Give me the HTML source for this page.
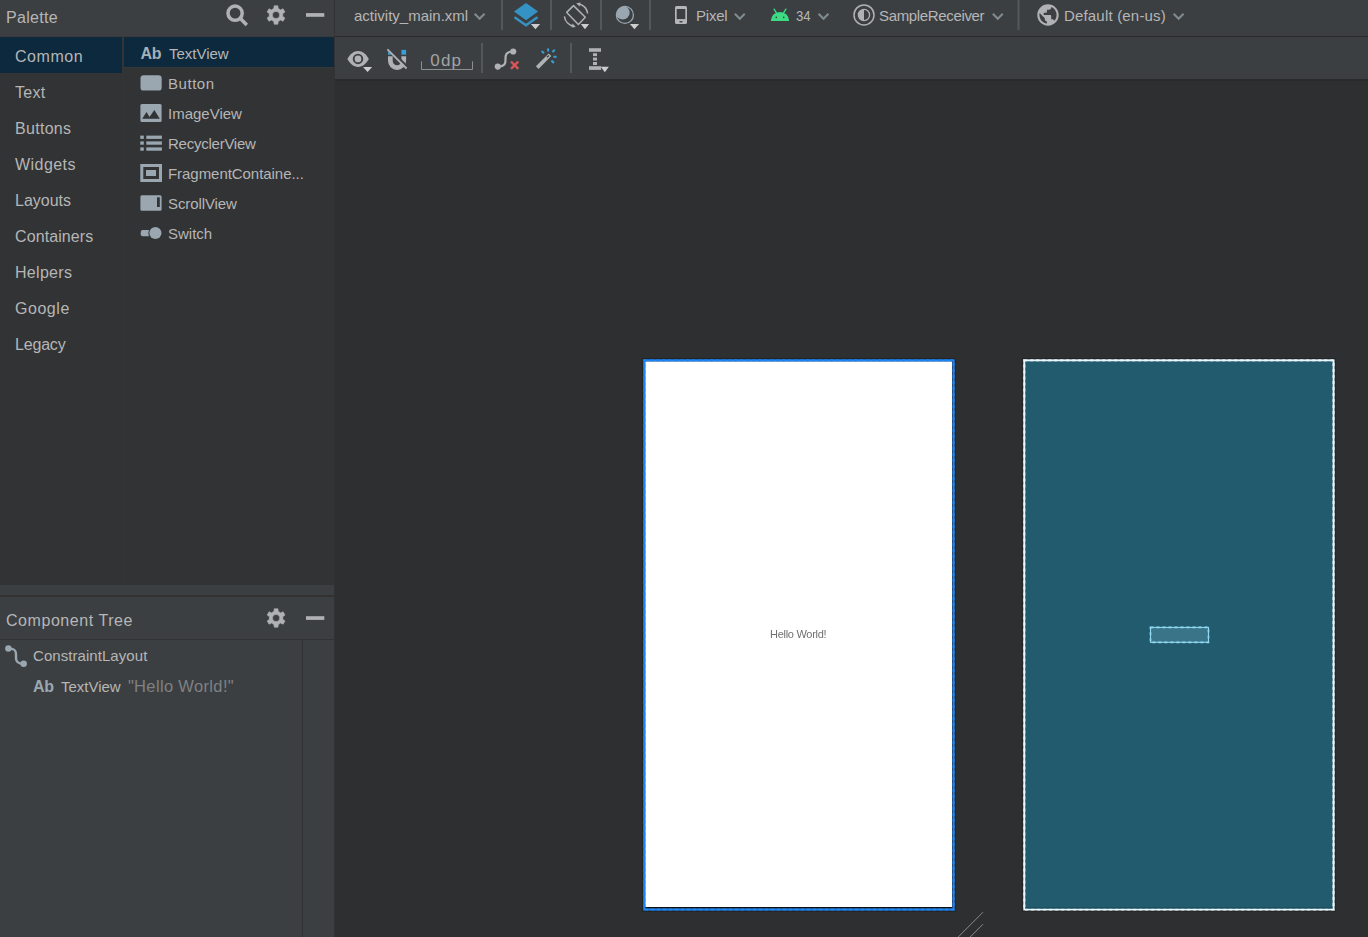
<!DOCTYPE html>
<html lang="en">
<head>
<meta charset="utf-8">
<title>activity_main.xml - Layout Editor</title>
<style>
*{box-sizing:border-box;margin:0;padding:0}
html,body{width:1368px;height:937px;overflow:hidden;background:#2d2f31}
body{position:relative;font-family:"Liberation Sans",sans-serif;color:#b6b6b6;font-size:16px}
.abs{position:absolute}
.t{position:absolute;white-space:nowrap;line-height:20px;height:20px}
svg{position:absolute;overflow:visible}
/* left panel */
#phead{left:0;top:0;width:334px;height:36px;background:#3c3f41}
#pline{left:0;top:36px;width:334px;height:1px;background:#393939}
#cats{left:0;top:37px;width:122px;height:548px;background:#313335}
#catdiv{left:122px;top:37px;width:2px;height:548px;background:#323435}
#items{left:124px;top:37px;width:210px;height:548px;background:#313335}
#catsel{left:0;top:37px;width:122px;height:36px;background:#0d293e}
#itemsel{left:124px;top:37px;width:210px;height:30px;background:#0d293e}
#split{left:0;top:585px;width:334px;height:10px;background:#3c3f41}
#splitline{left:0;top:595px;width:334px;height:2px;background:#323232}
#thead{left:0;top:597px;width:334px;height:42px;background:#3c3f41}
#tline{left:0;top:639px;width:334px;height:1px;background:#323232}
#tree{left:0;top:640px;width:334px;height:297px;background:#3c3f41}
#treecol{left:302px;top:640px;width:1px;height:297px;background:#323232}
#vdiv{left:334px;top:0;width:1px;height:937px;background:#323232}
/* toolbars */
#tb1{left:335px;top:0;width:1033px;height:36px;background:#3c3f41}
#tb1line{left:335px;top:36px;width:1033px;height:1px;background:#2a2a2a}
#tb2{left:335px;top:37px;width:1033px;height:42px;background:#3c3f41}
#tb2line{left:335px;top:79px;width:1033px;height:2px;background:#2a2a2b}
.sep{position:absolute;width:1px;background:#555555}
.cat{left:15px;font-size:16px}
.item{left:168px;font-size:15px}
</style>
</head>
<body>
<!-- PALETTE PANEL -->
<div class="abs" id="phead"></div>
<div class="abs" id="pline"></div>
<div class="abs" id="cats"></div>
<div class="abs" id="catdiv"></div>
<div class="abs" id="items"></div>
<div class="abs" id="catsel"></div>
<div class="abs" id="itemsel"></div>
<div class="abs" style="left:124px;top:67px;width:210px;height:1px;background:#363738"></div>
<div class="abs" id="split"></div>
<div class="abs" id="splitline"></div>
<div class="abs" id="thead"></div>
<div class="abs" id="tline"></div>
<div class="abs" id="tree"></div>
<div class="abs" id="treecol"></div>
<div class="abs" id="vdiv"></div>
<div class="abs" id="tb1"></div>
<div class="abs" id="tb1line"></div>
<div class="abs" id="tb2"></div>
<div class="abs" id="tb2line"></div>

<span class="t" id="tPalette" style="left:6.00px;top:8px;letter-spacing:0.300px">Palette</span>
<span class="t cat" id="c0" style="top:47px;left:15.00px;letter-spacing:0.540px">Common</span>
<span class="t cat" id="c1" style="top:83px;left:15.00px;letter-spacing:0.300px">Text</span>
<span class="t cat" id="c2" style="top:119px;left:15.00px;letter-spacing:0.300px">Buttons</span>
<span class="t cat" id="c3" style="top:155px;left:15.00px;letter-spacing:0.450px">Widgets</span>
<span class="t cat" id="c4" style="top:191px;left:15.00px">Layouts</span>
<span class="t cat" id="c5" style="top:227px;left:15.00px;letter-spacing:0.100px">Containers</span>
<span class="t cat" id="c6" style="top:263px;left:15.00px;letter-spacing:0.300px">Helpers</span>
<span class="t cat" id="c7" style="top:299px;left:15.00px;letter-spacing:0.540px">Google</span>
<span class="t cat" id="c8" style="top:335px;left:15.00px;letter-spacing:-0.180px">Legacy</span>

<span class="t item" id="i0" style="top:44px;left:168.90px">TextView</span>
<span class="t item" id="i1" style="top:74px;left:168.00px;letter-spacing:0.540px">Button</span>
<span class="t item" id="i2" style="top:104px;left:168.00px">ImageView</span>
<span class="t item" id="i3" style="top:134px;left:168.00px;letter-spacing:-0.246px">RecyclerView</span>
<span class="t item" id="i4" style="top:164px;left:168.00px;letter-spacing:-0.050px">FragmentContaine...</span>
<span class="t item" id="i5" style="top:194px;left:168.00px;letter-spacing:-0.100px">ScrollView</span>
<span class="t item" id="i6" style="top:224px;left:168.00px">Switch</span>

<span class="t" id="tCT" style="left:6.00px;top:611px;letter-spacing:0.554px">Component Tree</span>
<span class="t" id="tCL" style="left:33.00px;top:646px;font-size:15px;letter-spacing:0.060px">ConstraintLayout</span>
<span class="t" id="tTV" style="left:60.90px;top:677px;font-size:15px">TextView</span>
<span class="t" id="tHW" style="left:127.90px;top:676px;font-size:16.5px;color:#7f8183;letter-spacing:0.347px">"Hello World!"</span>

<!-- TOOLBAR 1 TEXT -->
<span class="t" id="tFile" style="left:354.00px;top:6px;font-size:15px">activity_main.xml</span>
<span class="t" id="tPixel" style="left:696.00px;top:6px;font-size:15px;letter-spacing:-0.225px">Pixel</span>
<span class="t" id="t34" style="left:795.6px;top:6px;font-size:15px;transform:scaleX(0.88);transform-origin:0 0">34</span>
<span class="t" id="tSR" style="left:879.00px;top:6px;font-size:15px;letter-spacing:-0.346px">SampleReceiver</span>
<span class="t" id="tDef" style="left:1063.90px;top:6px;font-size:15px;letter-spacing:0.193px">Default (en-us)</span>
<span class="t" id="t0dp" style="color:#a2a4a6;left:430.18px;top:51px;font-size:17px;letter-spacing:1.260px">0dp</span>

<!-- ICONS TOP -->
<svg id="icons" width="1368" height="937" viewBox="0 0 1368 937" style="left:0;top:0">
<g fill="#afb1b3">
<circle cx="235.1" cy="13.15" r="7.1" fill="none" stroke="#afb1b3" stroke-width="3.5"/>
<line x1="240.4" y1="18.4" x2="246.800" y2="24.900" stroke="#afb1b3" stroke-width="3.600"/>
<path fill-rule="evenodd" stroke="#afb1b3" stroke-width="0.6" stroke-linejoin="round" d="M273.80 8.57 L274.13 5.79 L277.87 5.79 L278.20 8.57 A6.80 6.80 0 0 1 280.47 9.88 L283.04 8.78 L284.91 12.01 L282.67 13.69 A6.80 6.80 0 0 1 282.67 16.31 L284.91 17.99 L283.04 21.22 L280.47 20.12 A6.80 6.80 0 0 1 278.20 21.43 L277.87 24.21 L274.13 24.21 L273.80 21.43 A6.80 6.80 0 0 1 271.53 20.12 L268.96 21.22 L267.09 17.99 L269.33 16.31 A6.80 6.80 0 0 1 269.33 13.69 L267.09 12.01 L268.96 8.78 L271.53 9.88 A6.80 6.80 0 0 1 273.80 8.57 Z M272.40 15.00 a3.60 3.60 0 1 0 7.20 0 a3.60 3.60 0 1 0 -7.20 0 Z"/>
<rect x="306" y="13.100" width="18.300" height="3.700"/>
<path fill-rule="evenodd" stroke="#afb1b3" stroke-width="0.6" stroke-linejoin="round" d="M273.90 611.57 L274.23 608.79 L277.97 608.79 L278.30 611.57 A6.80 6.80 0 0 1 280.57 612.88 L283.14 611.78 L285.01 615.01 L282.77 616.69 A6.80 6.80 0 0 1 282.77 619.31 L285.01 620.99 L283.14 624.22 L280.57 623.12 A6.80 6.80 0 0 1 278.30 624.43 L277.97 627.21 L274.23 627.21 L273.90 624.43 A6.80 6.80 0 0 1 271.63 623.12 L269.06 624.22 L267.19 620.99 L269.43 619.31 A6.80 6.80 0 0 1 269.43 616.69 L267.19 615.01 L269.06 611.78 L271.63 612.88 A6.80 6.80 0 0 1 273.90 611.57 Z M272.50 618.00 a3.60 3.60 0 1 0 7.20 0 a3.60 3.60 0 1 0 -7.20 0 Z"/>
<rect x="306" y="616.200" width="18.300" height="3.700"/>
</g>
<rect x="501" y="0" width="2" height="30" fill="#555759"/>
<rect x="550" y="0" width="2" height="30" fill="#555759"/>
<rect x="600" y="0" width="2" height="30" fill="#555759"/>
<rect x="649" y="0" width="2" height="30" fill="#555759"/>
<rect x="1017.5" y="0" width="2" height="30" fill="#555759"/>
<rect x="481" y="43" width="2" height="30" fill="#555759"/>
<rect x="570" y="43" width="2" height="30" fill="#555759"/>
<polyline points="474.65,13.85 479.60,18.8 484.55,13.85" fill="none" stroke="#7f8b91" stroke-width="2.1" stroke-linecap="butt" stroke-linejoin="miter"/>
<polyline points="734.85,13.85 739.80,18.8 744.75,13.85" fill="none" stroke="#7f8b91" stroke-width="2.1" stroke-linecap="butt" stroke-linejoin="miter"/>
<polyline points="818.55,13.85 823.50,18.8 828.45,13.85" fill="none" stroke="#7f8b91" stroke-width="2.1" stroke-linecap="butt" stroke-linejoin="miter"/>
<polyline points="992.85,13.85 997.80,18.8 1002.75,13.85" fill="none" stroke="#7f8b91" stroke-width="2.1" stroke-linecap="butt" stroke-linejoin="miter"/>
<polyline points="1173.65,13.85 1178.60,18.8 1183.55,13.85" fill="none" stroke="#7f8b91" stroke-width="2.1" stroke-linecap="butt" stroke-linejoin="miter"/>
<polygon points="526,2.9 538.1,11.5 526,20.2 514,11.5" fill="#3592c4"/>
<polyline points="515.3,17.7 526,25.2 536.7,17.7" fill="none" stroke="#3592c4" stroke-width="2.5" stroke-linecap="round"/>
<polygon points="530.9,24.0 540.1,24.0 535.5,29.2" fill="#cdcdcd"/>
<g fill="none" stroke="#afb1b3" stroke-width="1.5">
<polygon points="573.500,5.600 585.300,17.200 578.400,24.400 566.700,12.400" stroke-linejoin="round"/>
<path d="M578.5 3.9 A11.6 11.6 0 0 1 587.7 13.5"/>
<path d="M564.4 16.3 A11.6 11.6 0 0 0 573.6 26.2"/>
</g>
<polygon points="576.2,3.2 580.6,2.6 579.6,6.6" fill="#afb1b3"/>
<polygon points="575.8,26.9 571.6,27.4 572.6,23.6" fill="#afb1b3"/>
<polygon points="580.8,24.0 589.1,24.0 585.0,29.2" fill="#cdcdcd"/>
<clipPath id="ncl"><circle cx="624.9" cy="14.9" r="8.6"/></clipPath>
<circle cx="622.7" cy="12.6" r="7" fill="#9aa7b0" clip-path="url(#ncl)"/>
<circle cx="624.9" cy="14.9" r="8.5" fill="none" stroke="#9aa7b0" stroke-width="1.3"/>
<polygon points="629.9,24.0 639.1,24.0 634.5,29.2" fill="#cdcdcd"/>
<rect x="675" y="5.9" width="12" height="18.2" rx="1.6" fill="#b4b6b8"/>
<rect x="676.7" y="9" width="8.6" height="10.1" fill="#3c3f41"/>
<ellipse cx="681" cy="21.7" rx="1.8" ry="0.7" fill="#3c3f41"/>
<path d="M770.8 21.1 A9.2 9.2 0 0 1 789.2 21.1 Z" fill="#3ddc84"/>
<path d="M776.6 13.2 L774.1 9.1 M783.4 13.2 L785.9 9.1" stroke="#3ddc84" stroke-width="1.3" stroke-linecap="round"/>
<circle cx="776.3" cy="17.3" r="0.85" fill="#3c3f41"/><circle cx="783.7" cy="17.3" r="0.85" fill="#3c3f41"/>
<circle cx="864" cy="14.95" r="10" fill="none" stroke="#afb1b3" stroke-width="1.5"/>
<circle cx="864" cy="15" r="5.6" fill="none" stroke="#afb1b3" stroke-width="1.3"/>
<path d="M864 9.4 A5.6 5.6 0 0 0 864 20.6 Z" fill="#afb1b3"/>
<path transform="translate(1035.16 2.16) scale(1.07)" fill="#afb1b3" d="M12 2C6.48 2 2 6.48 2 12s4.48 10 10 10 10-4.48 10-10S17.52 2 12 2zm-1 17.93c-3.95-.49-7-3.85-7-7.93 0-.62.08-1.21.21-1.79L9 15v1c0 1.1.9 2 2 2v1.930zm6.9-2.54c-.26-.81-1-1.39-1.9-1.39h-1v-3c0-.55-.45-1-1-1H8v-2h2c.55 0 1-.45 1-1V7h2c1.1 0 2-.9 2-2v-.41c2.93 1.190 5 4.060 5 7.410 0 2.080-.8 3.970-2.100 5.390z"/>
<path d="M347.400 59 C350 54.200 353.600 51 358.100 51 C362.600 51 366.200 54.200 368.800 59 C366.200 63.800 362.600 66.900 358.100 66.900 C353.600 66.900 350 63.800 347.400 59 Z" fill="#afb1b3"/>
<circle cx="358" cy="58.900" r="4.300" fill="none" stroke="#3c3f41" stroke-width="1.900"/>
<polygon points="363.0,67.0 372.1,67.0 367.6,72.1" fill="#cdcdcd"/>
<path d="M388 56.200 L388 60.850 A9.050 9.050 0 0 0 406.100 60.850 L406.100 56.200 L401.400 56.200 L401.400 60.850 A4.350 4.350 0 0 1 392.700 60.850 L392.700 56.200 Z" fill="#afb1b3"/>
<polygon points="388,51.300 388,54.700 391.600,54.700" fill="#389fd6"/><rect x="401.4" y="49.9" width="4.7" height="4.8" fill="#389fd6"/>
<line x1="388.700" y1="48" x2="407.900" y2="67.200" stroke="#3c3f41" stroke-width="2"/>
<line x1="387.400" y1="49.300" x2="406.600" y2="68.500" stroke="#afb1b3" stroke-width="1.8"/>
<path d="M421.500 61.300 V69.500 H472.500 V61.300" fill="none" stroke="#8c8e90" stroke-width="1"/>
<circle cx="513.2" cy="51.5" r="3.1" fill="#afb1b3"/><circle cx="497.8" cy="66.6" r="3.1" fill="#afb1b3"/>
<path d="M497.800 66.600 C506 66.600 505.500 62 505.500 59 C505.500 55.500 505.500 51.500 513.200 51.500" fill="none" stroke="#afb1b3" stroke-width="2.2"/>
<path d="M511 61.500 L518.300 68.900 M518.300 61.500 L511 68.900" stroke="#d95558" stroke-width="2.400"/>
<line x1="537.200" y1="67.600" x2="550" y2="54.800" stroke="#afb1b3" stroke-width="3.7"/>
<line x1="547" y1="57.300" x2="548.800" y2="55.500" stroke="#3c3f41" stroke-width="1.3"/>
<g stroke="#389fd6" stroke-width="2"><line x1="541.600" y1="51.100" x2="544" y2="53.300"/><line x1="548.100" y1="48.400" x2="548.100" y2="51.500"/><line x1="552.400" y1="52.100" x2="554.800" y2="49.700"/><line x1="553.400" y1="56.800" x2="556.600" y2="56.800"/><line x1="551.400" y1="60.500" x2="553.900" y2="63"/></g>
<g fill="#afb1b3"><rect x="589" y="48.200" width="12" height="3.600"/><rect x="589" y="66.200" width="12" height="3.700"/><rect x="593" y="53.200" width="4" height="2.900"/><rect x="593" y="57.600" width="4" height="2.900"/><rect x="593" y="62" width="4" height="3"/></g>
<polygon points="600.7,66.8 608.9,66.8 604.8,72.2" fill="#cdcdcd"/>
</svg>
<!-- /ICONS TOP -->
<!-- ICONS LEFT -->
<svg id="icons2" width="340" height="937" viewBox="0 0 340 937" style="left:0;top:0">
<g fill="#9aa7b0">
<rect x="140.500" y="75.300" width="21.200" height="15.300" rx="3.200"/>
<rect x="140.400" y="103.900" width="21.200" height="18.100" rx="1.500"/>
<polygon points="142.200,118.700 146.500,112.100 149.500,116.900 154.350,110 159.800,118.700" fill="#313335"/>
<rect x="140.300" y="135.6" width="3.500" height="3.300"/><rect x="146.300" y="135.6" width="15.600" height="3.300"/>
<rect x="140.300" y="141.4" width="3.500" height="3.300"/><rect x="146.300" y="141.4" width="15.600" height="3.300"/>
<rect x="140.300" y="147.4" width="3.500" height="3.300"/><rect x="146.300" y="147.4" width="15.600" height="3.300"/>
<path fill-rule="evenodd" d="M140.300 164 H162 V182 H140.300 Z M143.300 167 V179 H159 V167 Z"/>
<rect x="146" y="170" width="10" height="6"/>
<rect x="140.400" y="195.300" width="21.200" height="15.400" rx="1.500"/>
<rect x="157" y="197.300" width="2.800" height="9.700" fill="#313335"/>
<rect x="140.700" y="230" width="12" height="6.200" rx="2"/>
<circle cx="155.400" cy="233" r="7.100" fill="#313335"/>
<circle cx="155.400" cy="233" r="6.100"/>
<circle cx="8.400" cy="648.400" r="3.250"/><circle cx="23.650" cy="663.650" r="3.250"/>
<path d="M8.400 648.400 C14.500 648.400 16 650.500 16 654 L16 658 C16 661.500 17.500 663.650 23.650 663.650" fill="none" stroke="#9aa7b0" stroke-width="2.450"/>
</g></svg>
<!-- /ICONS LEFT -->
<span class="t" id="iAb1" style="left:140.5px;top:44px;font-size:16px;font-weight:bold;color:#a4b0b9;letter-spacing:-0.3px">Ab</span>
<span class="t" id="iAb2" style="left:33.0px;top:677px;font-size:16px;font-weight:bold;color:#9aa7b0;letter-spacing:-0.3px">Ab</span>
<!-- CANVAS -->
<svg id="canvas" width="1368" height="937" viewBox="0 0 1368 937" style="left:0;top:0">
<!-- design surface -->
<rect x="642.600" y="358.700" width="312.600" height="552.500" fill="none" stroke="#1b1c1d" stroke-width="1.200" opacity="0.550"/>
<rect x="645.300" y="361.400" width="306.700" height="545.700" fill="#ffffff"/>
<rect x="645.300" y="907.100" width="307.300" height="1.300" fill="#0c0c0c"/>
<rect x="952" y="361.400" width="0.600" height="547" fill="#2a2a2a"/>
<rect x="644.250" y="360.300" width="309.350" height="549.200" fill="none" stroke="#1a86f8" stroke-width="2"/>
<rect x="644.250" y="360.300" width="309.350" height="549.200" fill="none" stroke="#1a86f8" stroke-width="2.600" stroke-dasharray="3 3" opacity="0.600"/>
<!-- blueprint -->
<rect x="1022.500" y="358.700" width="312.700" height="552.400" fill="none" stroke="#1b1c1d" stroke-width="1.200" opacity="0.550"/>
<rect x="1024.250" y="360.300" width="309.350" height="549.200" fill="#235b6e"/>
<rect x="1024.250" y="360.300" width="309.350" height="549.200" fill="none" stroke="#e6f6fc" stroke-width="1.900"/>
<rect x="1024.250" y="360.300" width="309.350" height="549.200" fill="none" stroke="#e6f6fc" stroke-width="2.600" stroke-dasharray="3 3" opacity="0.600"/>
<rect x="1025.200" y="907.300" width="307.400" height="1.200" fill="#1b4a5a"/><rect x="1150.500" y="627.400" width="58" height="14.900" fill="#3a7488" stroke="#8fd8f0" stroke-width="1.100"/>
<rect x="1150.500" y="627.400" width="58" height="14.900" fill="none" stroke="#8fd8f0" stroke-width="1.700" stroke-dasharray="3 3"/>
<!-- resize handle -->
<path d="M983 912.200 L958.200 937 M983 924.200 L970.200 937" stroke="#8a8a8a" stroke-width="1" fill="none"/>
</svg>
<span class="t" id="tHello" style="will-change:transform;left:770px;top:624px;font-size:11px;color:#707070;line-height:20px;letter-spacing:-0.278px">Hello World!</span>
</body>
</html>
